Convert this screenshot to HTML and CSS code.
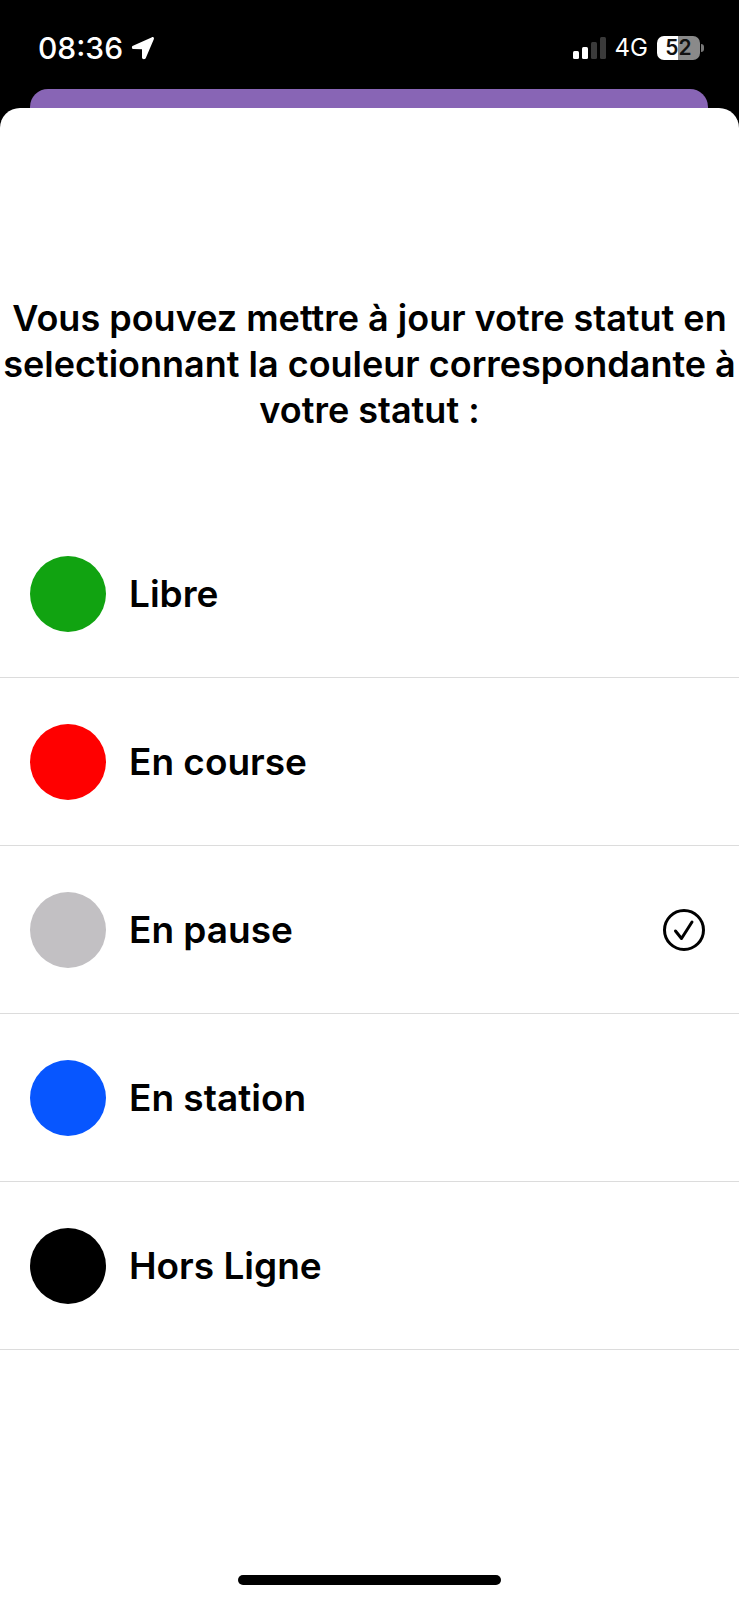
FILE: index.html
```html
<!DOCTYPE html>
<html lang="fr">
<head>
    <meta charset="UTF-8">
    <meta name="viewport" content="width=device-width, initial-scale=1.0">
    <title>Statut</title>
    <link rel="stylesheet" href="styles.css">
</head>
<body>
    <header class="status-bar">
        <div class="status-left">
            <span class="time">08:36</span>
            <svg class="location" width="24" height="24" viewBox="0 0 24 24" aria-hidden="true">
                <path d="M22.600 1.400C23.200 2 23 2.800 22.700 3.500L14.800 22.100C14 23.900 11 23.500 11 21.600V13.200L2.600 13C.7 13 .3 10.500 2 9.700L20.500 1.400C21.300 1 22.100.9 22.600 1.400Z" fill="#fff"/>
            </svg>
        </div>
        <div class="status-right">
            <svg class="signal" width="33" height="22" viewBox="0 0 33 22" aria-hidden="true">
                <rect x="0" y="14" width="6" height="8" rx="1.500" fill="#fff"/>
                <rect x="9" y="10" width="6" height="12" rx="1.500" fill="#fff"/>
                <rect x="18" y="5" width="6" height="17" rx="1.500" fill="#3a3a3a"/>
                <rect x="27" y="0" width="6" height="22" rx="1.500" fill="#3a3a3a"/>
            </svg>
            <span class="network">4G</span>
            <div class="battery">
                <span class="battery-level">52</span>
                <span class="battery-tip"></span>
            </div>
        </div>
    </header>

    <div class="back-card"></div>

    <main class="sheet">
        <h1 class="title">Vous pouvez mettre à jour votre statut en selectionnant la couleur correspondante à votre statut :</h1>

        <form class="status-list">
            <label class="status-row">
                <span class="dot green"></span>
                <span class="name">Libre</span>
                <input class="choice" type="radio" name="statut" value="libre">
                <svg class="tick" viewBox="0 0 42 42" aria-hidden="true"><path d="M12.500 22L18.500 29.500L29 13"/></svg>
            </label>
            <label class="status-row">
                <span class="dot red"></span>
                <span class="name">En course</span>
                <input class="choice" type="radio" name="statut" value="course">
                <svg class="tick" viewBox="0 0 42 42" aria-hidden="true"><path d="M12.500 22L18.500 29.500L29 13"/></svg>
            </label>
            <label class="status-row">
                <span class="dot gray"></span>
                <span class="name">En pause</span>
                <input class="choice" type="radio" name="statut" value="pause" checked>
                <svg class="tick" viewBox="0 0 42 42" aria-hidden="true"><path d="M12.500 22L18.500 29.500L29 13"/></svg>
            </label>
            <label class="status-row">
                <span class="dot blue"></span>
                <span class="name">En station</span>
                <input class="choice" type="radio" name="statut" value="station">
                <svg class="tick" viewBox="0 0 42 42" aria-hidden="true"><path d="M12.500 22L18.500 29.500L29 13"/></svg>
            </label>
            <label class="status-row">
                <span class="dot black"></span>
                <span class="name">Hors Ligne</span>
                <input class="choice" type="radio" name="statut" value="hors-ligne">
                <svg class="tick" viewBox="0 0 42 42" aria-hidden="true"><path d="M12.500 22L18.500 29.500L29 13"/></svg>
            </label>
        </form>

        <div class="home-indicator"></div>
    </main>
</body>
</html>
```

FILE: styles.css
```css
* {
    margin: 0;
    padding: 0;
    box-sizing: border-box;
}

body {
    display: flex;
    flex-direction: column;
    min-height: 100vh;
    background: #000;
    color: #000;
    font-family: Inter, "Liberation Sans", sans-serif;
}

/* Status bar */
.status-bar {
    display: flex;
    justify-content: space-between;
    align-items: center;
    padding: 30px 35px 23px 38px;
    color: #fff;
}

.status-left, .status-right {
    display: flex;
    align-items: center;
}

.status-left {
    gap: 8px;
}

.status-right {
    gap: 9px;
}

.time {
    font-size: 30px;
    font-weight: 500;
    line-height: 36px;
}

.network {
    font-size: 24px;
    line-height: 36px;
}

.battery {
    display: flex;
    align-items: center;
    gap: 1px;
}

.battery-level {
    width: 43px;
    border-radius: 7px;
    background: linear-gradient(to right, #fff 50%, #8a8a8a 50%);
    color: #111;
    font-size: 21px;
    font-weight: 600;
    line-height: 24px;
    text-align: center;
}

.battery-tip {
    width: 3px;
    height: 8px;
    border-radius: 0 3px 3px 0;
    background: #777;
}

/* Page left behind the sheet */
.back-card {
    height: 19px;
    margin: 0 31px 0 30px;
    border-radius: 18px 18px 0 0;
    background: #8865b5;
}

.sheet {
    flex: 1;
    display: flex;
    flex-direction: column;
    padding-top: 187px;
    border-radius: 20px 20px 0 0;
    background: #fff;
}

.title {
    margin-bottom: 77px;
    font-size: 36px;
    font-weight: 600;
    line-height: 46px;
    text-align: center;
}

/* Status choices */
.status-row {
    display: grid;
    grid-template-columns: 76px 1fr 42px;
    align-items: center;
    column-gap: 23px;
    height: 168px;
    padding: 0 34px 0 30px;
    border-bottom: 1px solid #dcdcdc;
    cursor: pointer;
}

.dot {
    height: 76px;
    border-radius: 50%;
}

.green { background: #11a311; }
.red { background: #ff0000; }
.gray { background: #c2c0c3; }
.blue { background: #0756ff; }
.black { background: #000; }

.name {
    font-size: 37px;
    font-weight: 600;
    line-height: 46px;
}

.choice, .tick {
    grid-row: 1;
    grid-column: 3;
    width: 42px;
    height: 42px;
    visibility: hidden;
}

.choice {
    appearance: none;
    border: 3px solid #000;
    border-radius: 50%;
}

.tick {
    fill: none;
    stroke: #000;
    stroke-width: 3;
    stroke-linecap: round;
    stroke-linejoin: round;
    pointer-events: none;
}

.choice:checked, .choice:checked + .tick {
    visibility: visible;
}

.home-indicator {
    width: 263px;
    height: 10px;
    margin: auto auto 15px;
    border-radius: 5px;
    background: #000;
}
```
